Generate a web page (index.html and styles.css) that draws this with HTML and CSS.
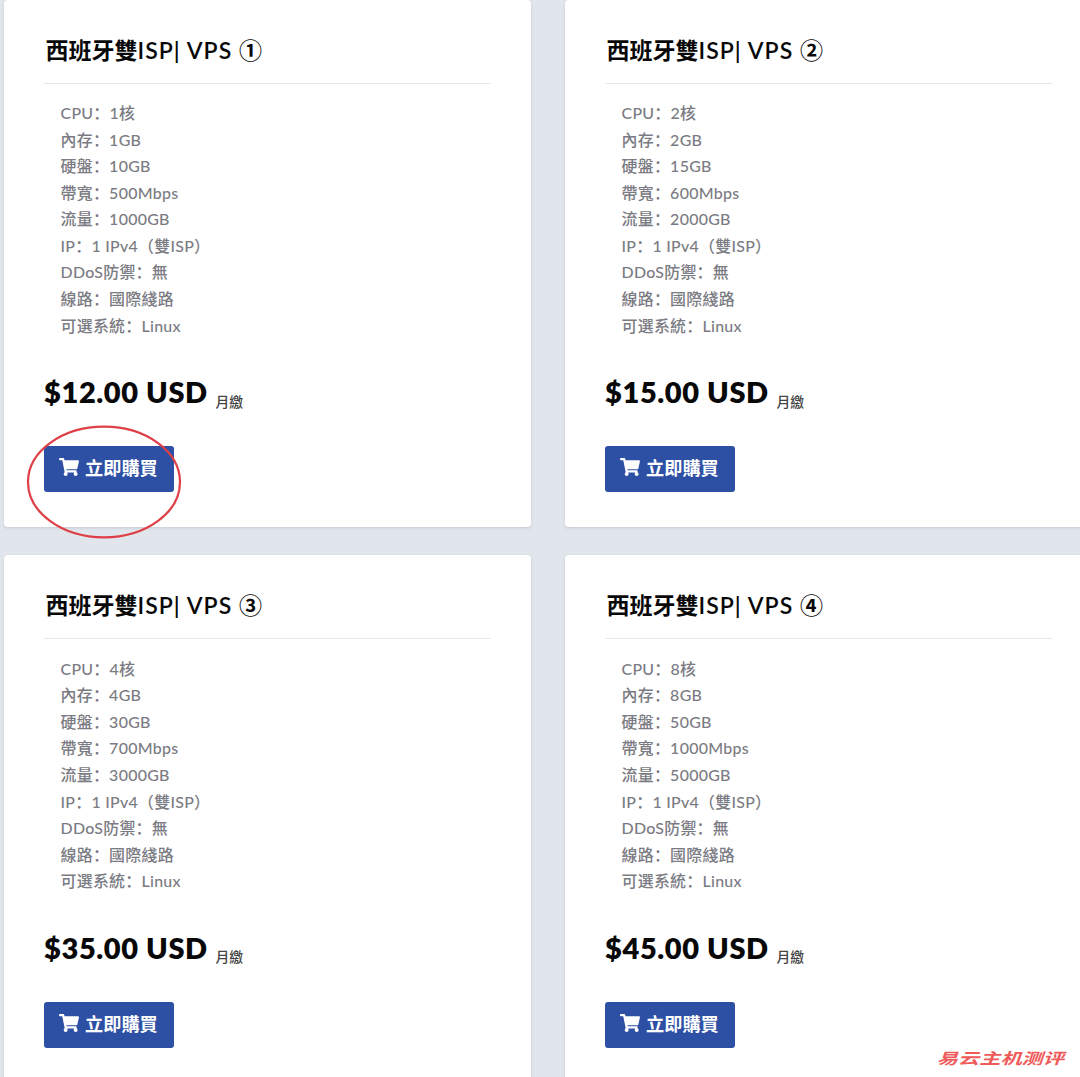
FILE: index.html
```html
<!DOCTYPE html>
<html lang="zh-Hans">
<head>
<meta charset="utf-8">
<title>西班牙雙ISP VPS</title>
<link rel="stylesheet" href="styles.css">
</head>
<body>
<svg class="sprite" aria-hidden="true"><symbol id="cart" viewBox="0 0 576 512"><path d="M528.12 301.319l47.273-208C578.806 78.301 567.391 64 551.99 64H159.208l-9.166-44.81C147.758 8.021 137.93 0 126.529 0H24C10.745 0 0 10.745 0 24v16c0 13.255 10.745 24 24 24h69.883l70.248 343.435C147.325 417.1 136 435.222 136 456c0 30.928 25.072 56 56 56s56-25.072 56-56c0-15.674-6.447-29.835-16.824-40h209.647C430.447 426.165 424 440.326 424 456c0 30.928 25.072 56 56 56s56-25.072 56-56c0-22.172-12.888-41.332-31.579-50.405l5.517-24.276c3.413-15.018-8.002-29.319-23.403-29.319H218.117l-6.545-32h293.145c11.206 0 20.92-7.754 23.403-18.681z"/></symbol></svg>
<main class="plans">
  <article class="card">
    <h2 class="title">西班牙雙<span class="latin">ISP| VPS </span><span class="number">①</span></h2>
    <ul class="specs">
      <li>CPU：1核</li><li>內存：1GB</li><li>硬盤：10GB</li><li>帶寬：500Mbps</li><li>流量：1000GB</li><li>IP：1 IPv4（雙ISP）</li><li>DDoS防禦：無</li><li>線路：國際綫路</li><li>可選系統：Linux</li>
    </ul>
    <div class="price"><strong>$12.00 USD</strong><span class="cycle">月繳</span></div>
    <a class="buy"><svg class="icon"><use href="#cart"/></svg>立即購買</a>
    <svg class="ring" viewBox="0 0 156 114"><ellipse cx="78" cy="57" rx="76" ry="55.3"/></svg>
  </article>
  <article class="card">
    <h2 class="title">西班牙雙<span class="latin">ISP| VPS </span><span class="number">②</span></h2>
    <ul class="specs">
      <li>CPU：2核</li><li>內存：2GB</li><li>硬盤：15GB</li><li>帶寬：600Mbps</li><li>流量：2000GB</li><li>IP：1 IPv4（雙ISP）</li><li>DDoS防禦：無</li><li>線路：國際綫路</li><li>可選系統：Linux</li>
    </ul>
    <div class="price"><strong>$15.00 USD</strong><span class="cycle">月繳</span></div>
    <a class="buy"><svg class="icon"><use href="#cart"/></svg>立即購買</a>
  </article>
  <article class="card">
    <h2 class="title">西班牙雙<span class="latin">ISP| VPS </span><span class="number">③</span></h2>
    <ul class="specs">
      <li>CPU：4核</li><li>內存：4GB</li><li>硬盤：30GB</li><li>帶寬：700Mbps</li><li>流量：3000GB</li><li>IP：1 IPv4（雙ISP）</li><li>DDoS防禦：無</li><li>線路：國際綫路</li><li>可選系統：Linux</li>
    </ul>
    <div class="price"><strong>$35.00 USD</strong><span class="cycle">月繳</span></div>
    <a class="buy"><svg class="icon"><use href="#cart"/></svg>立即購買</a>
  </article>
  <article class="card">
    <h2 class="title">西班牙雙<span class="latin">ISP| VPS </span><span class="number">④</span></h2>
    <ul class="specs">
      <li>CPU：8核</li><li>內存：8GB</li><li>硬盤：50GB</li><li>帶寬：1000Mbps</li><li>流量：5000GB</li><li>IP：1 IPv4（雙ISP）</li><li>DDoS防禦：無</li><li>線路：國際綫路</li><li>可選系統：Linux</li>
    </ul>
    <div class="price"><strong>$45.00 USD</strong><span class="cycle">月繳</span></div>
    <a class="buy"><svg class="icon"><use href="#cart"/></svg>立即購買</a>
  </article>
</main>
<div class="watermark">易云主机测评</div>
</body>
</html>
```
FILE: styles.css
```css
* { box-sizing: border-box; }
html, body { height: 100%; overflow: hidden; }
body {
  margin: 0;
  background: #e1e5ec;
  font-family: Lato, "Noto Sans CJK SC", sans-serif;
}
.sprite { display: none; }
.plans {
  display: grid;
  grid-template-columns: 527px 527px;
  grid-auto-rows: 527.6px;
  gap: 28.1px 34px;
  width: 1088px;
  margin: -0.5px 0 0 4px;
}
.card {
  position: relative;
  display: flex;
  flex-direction: column;
  align-items: flex-start;
  padding: 0 40px;
  background: #fff;
  border-radius: 4px;
  box-shadow: 0 1px 3px rgba(60, 70, 90, .16);
}
.title {
  width: 447px;
  height: 84px;
  margin: 0;
  padding: 32.2px 0 0 1.5px;
  border-bottom: 1px solid #e6e8ea;
  font-size: 23px;
  line-height: 34px;
  font-weight: 700;
  color: #080808;
  white-space: pre;
}
.latin { font-weight: 600; letter-spacing: 1.05px; }
.number { font-family: "Noto Sans CJK SC", sans-serif; }
.specs {
  height: 240px;
  margin: 16.6px 0 0;
  padding: 0 0 0 16.5px;
  list-style: none;
  font-size: 15.95px;
  letter-spacing: .27px;
  line-height: 26.56px;
  font-weight: 500;
  color: #7b7b83;
  white-space: nowrap;
}
.price {
  display: flex;
  align-items: baseline;
  gap: 8px;
  height: 46px;
  margin-top: 29px;
  color: #080808;
  line-height: 46px;
}
.price strong { width: 163.5px; font-size: 29px; font-weight: 800; letter-spacing: .62px; white-space: nowrap; }
.cycle { font-size: 13.8px; font-weight: 500; color: #444; position: relative; top: 3.5px; }
.buy {
  display: flex;
  align-items: center;
  gap: 6px;
  width: 129.5px;
  height: 46px;
  margin-top: 30.8px;
  padding: 0 0 3px 15px;
  border-radius: 3px;
  background: #2d4fa4;
  color: #fff;
  font-size: 18.2px;
  font-weight: 700;
  white-space: nowrap;
}
.icon { width: 20px; height: 18px; fill: currentColor; }
.ring {
  position: absolute;
  left: 22px;
  top: 425px;
  width: 156px;
  height: 114px;
  z-index: 2;
}
.ring ellipse { fill: none; stroke: #df3f46; stroke-width: 2.2; }
.watermark {
  position: absolute;
  right: 16px;
  bottom: 4px;
  font: italic 700 21.2px/30px "Noto Sans CJK SC", sans-serif;
  color: #ef5b5b;
  transform: scaleY(.72);
}
```
